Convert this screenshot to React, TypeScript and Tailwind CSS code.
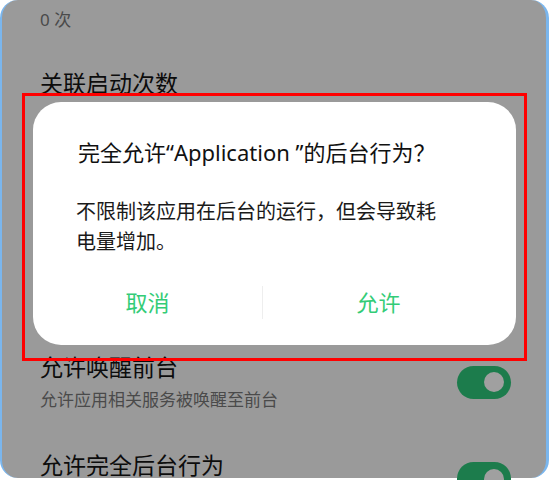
import React from "react";

const font = { fontFamily: '"Noto Sans", "Noto Sans CJK SC", sans-serif' };

function Toggle({ className = "" }: { className?: string }) {
  return (
    <div className={"w-[54px] h-[33px] rounded-full bg-[#1c7c4c] flex items-center justify-end pr-[7px] shrink-0 " + className}>
      <div className="w-[20px] h-[20px] rounded-full bg-[#a0a0a0]" />
    </div>
  );
}

export default function App() {
  return (
    <div className="w-[549px] h-[480px] bg-white relative overflow-hidden" style={font}>
      <div className="h-[478px] rounded-[18px] bg-[#9a9a9a] border-l-[2px] border-r-[3px] border-[#7ab6ee] flex flex-col pl-[38px] pr-[35px]">
        <div className="pt-[8px] text-[17px] leading-[24px] text-[#4a4a4a]">0 次</div>
        <div className="mt-[36px] text-[23px] leading-[30px] text-[#0c0c0c]">关联启动次数</div>
        <div className="mt-[254px] flex items-center justify-between">
          <div className="flex flex-col">
            <div className="text-[23px] leading-[30px] text-[#0c0c0c]">允许唤醒前台</div>
            <div className="mt-[6px] text-[17px] leading-[24px] text-[#4a4a4a]">允许应用相关服务被唤醒至前台</div>
          </div>
          <Toggle />
        </div>
        <div className="mt-[41px] flex items-start justify-between">
          <div className="text-[23px] leading-[24px] text-[#0c0c0c]">允许完全后台行为</div>
          <Toggle className="mt-[9px]" />
        </div>
      </div>

      <div className="absolute left-[22px] top-[93px] w-[505px] h-[268px] border-[3px] border-[#ff0000] pl-[8px] pt-[6px]">
        <div className="w-[483px] h-[243px] bg-white rounded-[28px] flex flex-col">
          <div className="pt-[35px] pl-[45px] text-[22px] leading-[30px] text-[#111111]">
            完全允许“Application ”的后台行为？
          </div>
          <div className="mt-[30px] pl-[43px] pr-[40px] text-[20px] leading-[30px] text-[#1a1a1a]">
            不限制该应用在后台的运行，但会导致耗
            <br />
            电量增加。
          </div>
          <div className="mt-[17px] h-[56px] flex items-center">
            <div className="w-[229px] text-center text-[22px] leading-[30px] text-[#33cc77]">取消</div>
            <div className="w-px h-[33px] bg-[#eeeeee]" />
            <div className="w-[231px] text-center text-[22px] leading-[30px] text-[#33cc77]">允许</div>
          </div>
        </div>
      </div>
    </div>
  );
}
